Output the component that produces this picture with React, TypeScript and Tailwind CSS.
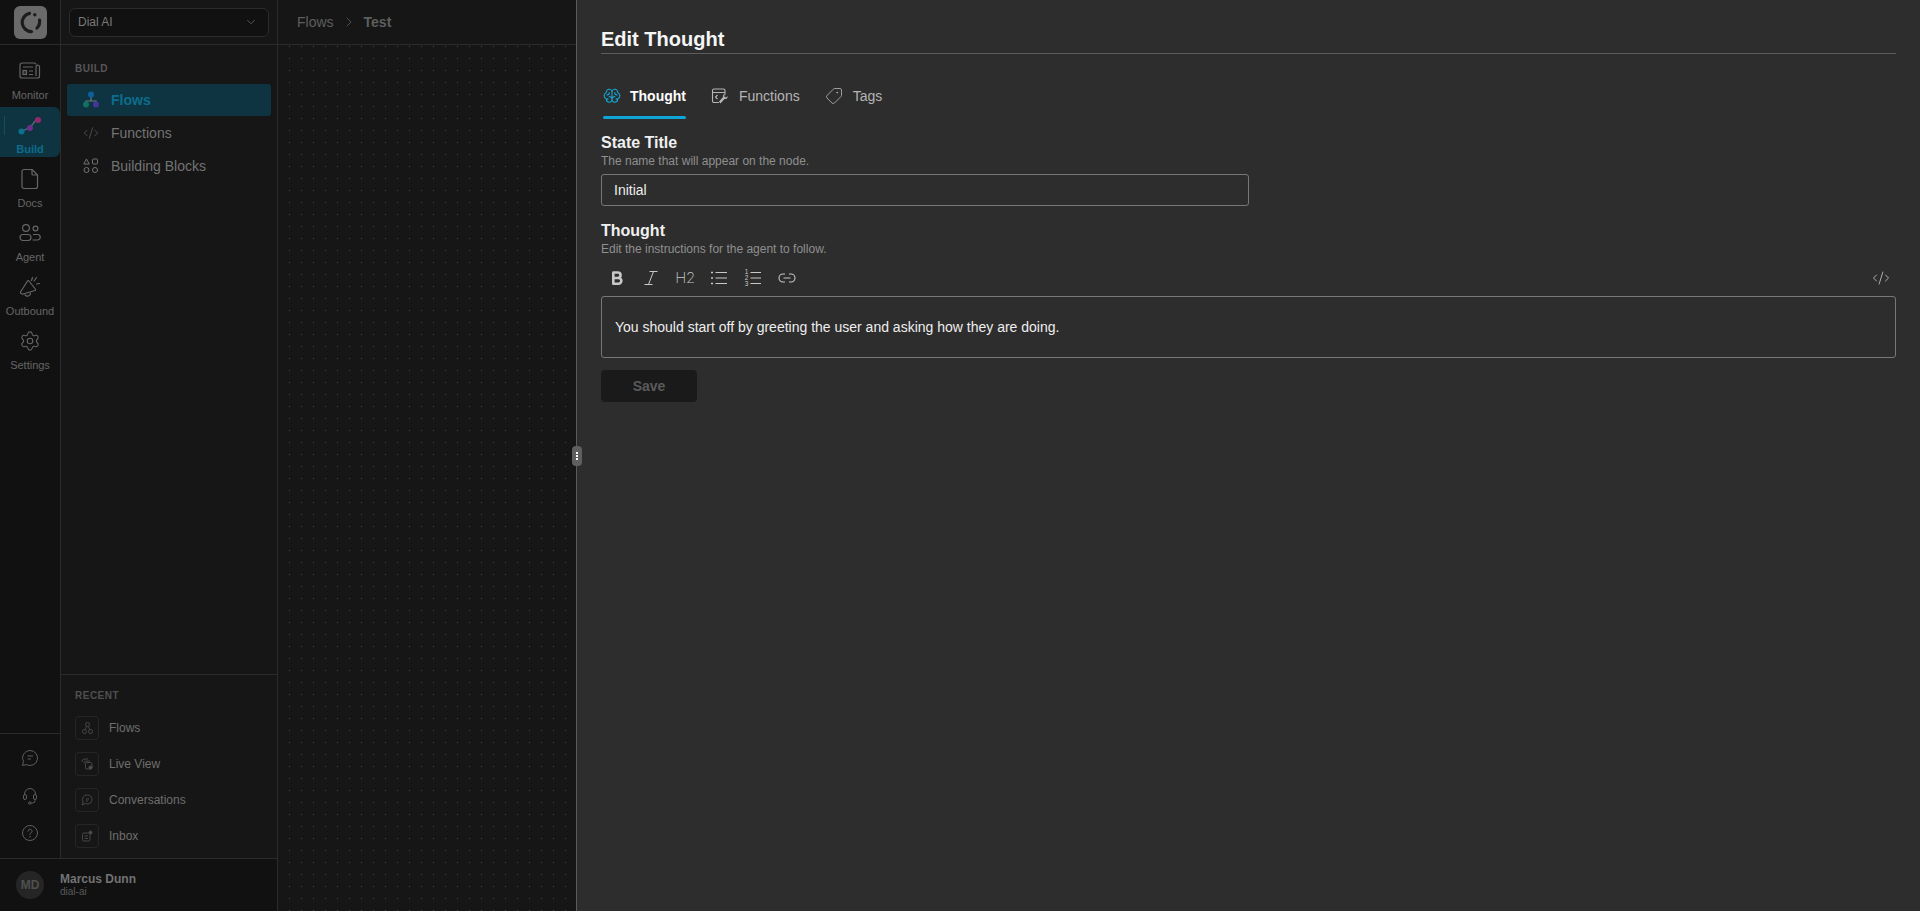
import { ChevronDown, ChevronRight, CodeXml, Settings, Tag } from "lucide-react";
import { PiBrain } from "react-icons/pi";

function Logo() {
  return (
    <div className="flex h-[33px] w-[33px] items-center justify-center rounded-md bg-[#6a6a6a]">
      <svg width="25" height="25" viewBox="0 0 25 25" fill="none" stroke="#1c1c1c" strokeWidth="3.2" strokeLinecap="round">
        <path d="M11.5 3.4A9.2 9.2 0 0 0 13.500 21.600" />
        <path d="M21.500 10a9.200 9.200 0 0 1-2.500 8" />
        <circle cx="16.800" cy="4.800" r="0.900" fill="#1c1c1c" strokeWidth="1.600" />
      </svg>
    </div>
  );
}

function BuildIcon() {
  return (
    <svg width="24" height="24" viewBox="0 0 24 24" fill="none">
      <path d="M3.500 18.500l9-4.500 7-9" stroke="#5a6e78" strokeWidth="1.300" />
      <circle cx="3.500" cy="18.500" r="3" fill="#0b6f8f" />
      <circle cx="12" cy="15" r="3" fill="#6c2f8c" />
      <circle cx="20" cy="7" r="3" fill="#92286f" />
    </svg>
  );
}

function FlowsIcon() {
  return (
    <svg width="16" height="18" viewBox="0 0 16 18" fill="none">
      <path d="M8 6v4M3 12v-2h10v2" stroke="#6b7a82" strokeWidth="1.200" />
      <circle cx="8" cy="3.500" r="3" fill="#0c5f9c" />
      <circle cx="3" cy="13.500" r="3" fill="#11705f" />
      <circle cx="13" cy="13.500" r="3" fill="#46349a" />
    </svg>
  );
}

function MonitorIcon() {
  return (
    <svg width="22" height="20" viewBox="0 0 22 20" fill="none" stroke="currentColor" strokeWidth="1.200">
      <path d="M17 3.500A1.700 1.700 0 0 0 15.300 2H3a2 2 0 0 0-2 2v11a2 2 0 0 0 2 2h15.500a2 2 0 0 0 2-2V6.500A1.500 1.500 0 0 0 17 5.500V15" />
      <path d="M4 6h10M10 10h4M10 13.500h4" />
      <rect x="4" y="9.500" width="3.500" height="4" fill="currentColor" fillOpacity="0.300" />
    </svg>
  );
}

function DocsIcon() {
  return (
    <svg width="18" height="22" viewBox="0 0 18 22" fill="none" stroke="currentColor" strokeWidth="1.200" strokeLinejoin="round">
      <path d="M3 1.500h8l5.500 5.500v11.500a2 2 0 0 1-2 2H3a2 2 0 0 1-2-2v-15a2 2 0 0 1 2-2z" />
      <path d="M11 1.500V6a1 1 0 0 0 1 1h4.500" />
    </svg>
  );
}

function AgentIcon() {
  return (
    <svg width="22" height="20" viewBox="0 0 22 20" fill="none" stroke="currentColor" strokeWidth="1.200">
      <circle cx="7" cy="5" r="3.400" />
      <circle cx="16.500" cy="5.500" r="2.400" />
      <rect x="1" y="11.500" width="11" height="6" rx="3" />
      <path d="M14 11.500h4.500a2.600 2.600 0 0 1 0 5.500H13.500" />
    </svg>
  );
}

function OutboundIcon() {
  return (
    <svg width="22" height="22" viewBox="0 0 22 22" fill="none" stroke="currentColor" strokeWidth="1.200" strokeLinecap="round" strokeLinejoin="round">
      <path d="M8.500 5 1.500 16a1 1 0 0 0 .4 1.300l1.200.7a1 1 0 0 0 .9 0L16 14.500a1 1 0 0 0 .3-1.500L10 5a1 1 0 0 0-1.500 0z" />
      <path d="M6 18.800a3 3 0 0 0 5.500-1.800" />
      <path d="M12.500 4.500 13.500 1.500M17.500 1.500l-2.500 3.500M17.500 8l3-.5" />
    </svg>
  );
}

function ChatIcon() {
  return (
    <svg width="18" height="18" viewBox="0 0 18 18" fill="none" stroke="currentColor" strokeWidth="1">
      <path d="M9 1.500a7.500 7.500 0 1 1-3.500 14.100L1.500 16.500l1-4A7.500 7.500 0 0 1 9 1.500z" strokeLinejoin="round" />
      <path d="M6.500 7h5.500M6.500 10h3.500" />
    </svg>
  );
}

function HeadsetIcon() {
  return (
    <svg width="18" height="18" viewBox="0 0 18 18" fill="none" stroke="currentColor" strokeWidth="1">
      <path d="M3.500 8V7a5.500 5.500 0 0 1 11 0v1" />
      <rect x="2.500" y="7.500" width="3" height="5" rx="1.500" />
      <rect x="12.500" y="7.500" width="3" height="5" rx="1.500" />
      <path d="M14 12.500v1a2.500 2.500 0 0 1-2.500 2.500H10" />
      <circle cx="8.800" cy="16" r="1.200" />
    </svg>
  );
}

function HelpIcon() {
  return (
    <svg width="16" height="16" viewBox="0 0 16 16" fill="none" stroke="currentColor" strokeWidth="1">
      <circle cx="8" cy="8" r="7.500" />
      <path d="M6 6.200a2 2 0 1 1 3 1.700c-.7.400-1 .8-1 1.600" strokeLinecap="round" />
      <circle cx="8" cy="11.800" r="0.400" />
    </svg>
  );
}

function BlocksIcon() {
  return (
    <svg width="16" height="16" viewBox="0 0 16 16" fill="none" stroke="currentColor" strokeWidth="1">
      <path d="M3.500 1 6.200 6H.8z" strokeLinejoin="round" />
      <rect x="9.500" y="1" width="5" height="5" rx="1" />
      <circle cx="3.500" cy="12" r="2.500" />
      <circle cx="12" cy="12" r="2.500" />
    </svg>
  );
}

function TabFunctionsIcon() {
  return (
    <svg width="18" height="18" viewBox="0 0 18 18" fill="none" stroke="currentColor" strokeWidth="1.100">
      <path d="M8 15.500H3a1.500 1.500 0 0 1-1.500-1.500V3.500A1.500 1.500 0 0 1 3 2h9.500A1.500 1.500 0 0 1 14 3.500V7" />
      <path d="M1.500 5.500H14M6.500 8 4.500 10l2 2" />
      <path d="M9.500 16.500l4-4.500a2.400 2.400 0 0 0 3-3l-1.500 1.400-1.400-.4-.4-1.400L15 7a2.400 2.400 0 0 0-3 3l-4 4.500z" fill="currentColor" stroke="none" />
    </svg>
  );
}

function BoldIcon() {
  return (
    <svg width="18" height="18" viewBox="0 0 18 18" fill="none" stroke="currentColor" strokeWidth="2.600" strokeLinejoin="round">
      <path d="M5.300 3.500h4.500a2.700 2.700 0 0 1 0 5.500H5.300zM5.300 9h5.200a2.800 2.800 0 0 1 0 5.700H5.300z" />
    </svg>
  );
}

function ItalicIcon() {
  return (
    <svg width="18" height="18" viewBox="0 0 18 18" fill="none" stroke="currentColor" strokeWidth="1">
      <path d="M7.500 2.500h8M2.500 15.500h8M11.500 2.500l-5 13" />
    </svg>
  );
}

function ListIcon() {
  return (
    <svg width="18" height="18" viewBox="0 0 18 18" fill="none" stroke="currentColor" strokeWidth="1">
      <path d="M5.500 3.500h11.500M5.500 9h11.500M5.500 14.500h11.500" />
      <path d="M1 3.500h2M1 9h2M1 14.500h2" strokeWidth="1.400" />
    </svg>
  );
}

function OrderedIcon() {
  return (
    <svg width="18" height="18" viewBox="0 0 18 18" fill="none" stroke="currentColor" strokeWidth="1">
      <path d="M6.500 3.500h10.500M6.500 9h10.500M6.500 14.500h10.500" />
      <g fill="currentColor" stroke="none" fontSize="6.500" fontFamily="Liberation Sans" textAnchor="middle">
        <text x="2.500" y="5">1</text>
        <text x="2.500" y="11">2</text>
        <text x="2.500" y="17">3</text>
      </g>
    </svg>
  );
}

function LinkIcon() {
  return (
    <svg width="18" height="18" viewBox="0 0 18 18" fill="none" stroke="currentColor" strokeWidth="1.100">
      <path d="M7 5H5a4 4 0 0 0 0 8h2M11 5h2a4 4 0 0 1 0 8h-2M5.500 9h7" />
    </svg>
  );
}

function RailItem({ icon, label, active }: { icon: React.ReactNode; label: string; active?: boolean }) {
  return (
    <div className={`relative flex h-[50px] w-[60px] flex-col items-center gap-[5px] rounded-r-md pt-[6px] ${active ? "bg-[#0d3440] font-bold text-[#0e6c8c]" : "text-[#666]"}`}>
      {active && <span className="absolute left-[4px] top-[9px] h-[19px] w-px bg-[#154c5e]" />}
      <span className="flex h-[24px] items-center justify-center">{icon}</span>
      <span className="text-[11px] leading-[14px]">{label}</span>
    </div>
  );
}

function RecentRow({ icon, label }: { icon: React.ReactNode; label: string }) {
  return (
    <div className="flex h-[24px] items-center gap-[10px]">
      <span className="flex h-[24px] w-[24px] items-center justify-center rounded border border-[#262626] text-[#4d4d4d]">{icon}</span>
      <span className="text-xs text-[#6e6e6e]">{label}</span>
    </div>
  );
}

function SmallFlows() {
  return (
    <svg width="11" height="12" viewBox="0 0 11 12" fill="none" stroke="currentColor" strokeWidth="0.900">
      <circle cx="5.500" cy="2.500" r="2" />
      <circle cx="2.500" cy="9.500" r="2" />
      <circle cx="8.500" cy="9.500" r="2" />
      <path d="M4.500 4.500l-1.200 3M6.500 4.500l1.200 3" />
    </svg>
  );
}

function SmallLive() {
  return (
    <svg width="12" height="12" viewBox="0 0 12 12" fill="none" stroke="currentColor" strokeWidth="0.900">
      <path d="M1 4a3 3 0 0 1 3-3h3M3 5.500a2.500 2.500 0 0 1 2.500-2.500H9" />
      <rect x="4.500" y="4.500" width="6.500" height="6.500" rx="1.500" />
      <circle cx="9.500" cy="9.500" r="1.600" fill="currentColor" />
    </svg>
  );
}

function SmallConversation() {
  return (
    <svg width="12" height="12" viewBox="0 0 12 12" fill="none" stroke="currentColor" strokeWidth="0.900">
      <path d="M6.500 1a4.500 4.500 0 1 1-2 8.500L1 11l1.200-3A4.500 4.500 0 0 1 6.500 1z" strokeLinejoin="round" />
      <path d="M5 5h3M5 7h2" />
    </svg>
  );
}

function SmallInbox() {
  return (
    <svg width="12" height="12" viewBox="0 0 12 12" fill="none" stroke="currentColor" strokeWidth="0.900">
      <rect x="1.500" y="3" width="7.500" height="8" rx="1.500" />
      <path d="M3.500 6h3.500M3.500 8.500h3.500" />
      <circle cx="9.500" cy="2.500" r="1.500" fill="currentColor" />
    </svg>
  );
}

export default function App() {
  return (
    <div className="relative flex h-[911px] w-[1920px] overflow-hidden bg-[#161616] font-['Liberation_Sans',sans-serif]">
      <div className="flex w-[278px] shrink-0 flex-col border-r border-[#2b2b2b]">
        <div className="flex min-h-0 flex-1">
          {/* rail */}
          <div className="flex w-[61px] shrink-0 flex-col border-r border-[#2b2b2b] bg-[#111]">
            <div className="flex h-[45px] shrink-0 items-center justify-center border-b border-[#2b2b2b]">
              <Logo />
            </div>
            <div className="flex flex-1 flex-col gap-[4px] pt-[8px]">
              <RailItem icon={<MonitorIcon />} label="Monitor" />
              <RailItem active icon={<BuildIcon />} label="Build" />
              <RailItem icon={<DocsIcon />} label="Docs" />
              <RailItem icon={<AgentIcon />} label="Agent" />
              <RailItem icon={<OutboundIcon />} label="Outbound" />
              <RailItem icon={<Settings size={22} strokeWidth={1.2} />} label="Settings" />
            </div>
            <div className="flex h-[125px] shrink-0 flex-col items-center justify-center gap-[20px] pb-[2px] border-t border-[#2b2b2b] text-[#5e5e5e]">
              <ChatIcon />
              <HeadsetIcon />
              <HelpIcon />
            </div>
          </div>
          {/* sidebar */}
          <div className="flex min-w-0 flex-1 flex-col">
            <div className="flex h-[45px] shrink-0 items-center border-b border-[#2b2b2b] px-[8px]">
              <div className="flex h-[29px] w-[200px] items-center justify-between rounded-md border border-[#2b2b2b] bg-[#111] pl-[8px] pr-[10px] text-xs text-[#7a7a7a]">
                Dial AI
                <ChevronDown size={14} strokeWidth={1.4} className="text-[#666]" />
              </div>
            </div>
            <div className="flex flex-1 flex-col px-[6px] pt-[18px]">
              <div className="mb-[9px] pl-[8px] text-[10px] font-bold leading-[12px] tracking-[0.5px] text-[#565656]">BUILD</div>
              <div className="flex h-[32px] items-center gap-[12px] rounded-[3px] bg-[#0d3440] pl-[16px] text-sm font-bold text-[#0e6c8c]">
                <FlowsIcon />
                Flows
              </div>
              <div className="flex h-[33px] items-center gap-[12px] pl-[16px] text-sm text-[#737373]">
                <CodeXml size={16} strokeWidth={1.1} className="text-[#5e5e5e]" />
                Functions
              </div>
              <div className="flex h-[33px] items-center gap-[12px] pl-[16px] text-sm text-[#737373]">
                <BlocksIcon />
                Building Blocks
              </div>
            </div>
            <div className="flex h-[184px] shrink-0 flex-col border-t border-[#2b2b2b] pl-[14px] pt-[15px]">
              <div className="mb-[14px] text-[10px] font-bold leading-[12px] tracking-[0.5px] text-[#4f4f4f]">RECENT</div>
              <div className="flex flex-col gap-[12px]">
                <RecentRow icon={<SmallFlows />} label="Flows" />
                <RecentRow icon={<SmallLive />} label="Live View" />
                <RecentRow icon={<SmallConversation />} label="Conversations" />
                <RecentRow icon={<SmallInbox />} label="Inbox" />
              </div>
            </div>
          </div>
        </div>
        <div className="flex h-[53px] shrink-0 items-center gap-[6px] border-t border-[#2b2b2b] bg-[#111] pl-[16px]">
          <div className="flex h-[28px] w-[28px] items-center justify-center rounded-full bg-[#252525] text-xs font-bold text-[#4f4f4f]">MD</div>
          <div className="mb-[2px] ml-[10px] flex flex-col">
            <span className="text-xs font-bold leading-[14px] text-[#737373]">Marcus Dunn</span>
            <span className="text-[10px] leading-[11px] text-[#5a5a5a]">dial-ai</span>
          </div>
        </div>
      </div>
      {/* canvas */}
      <div className="flex flex-1 flex-col">
        <div className="flex h-[45px] shrink-0 items-center gap-[7px] border-b border-[#2b2b2b] pl-[19px] text-sm text-[#5e5e5e]">
          Flows
          <ChevronRight size={16} strokeWidth={1.2} />
          <span className="font-bold">Test</span>
        </div>
        <div className="flex-1 bg-[radial-gradient(circle_at_11.5px_1.5px,#484848_0.7px,transparent_0.7px)] bg-[size:12px_12px]" />
      </div>
      {/* drawer */}
      <div className="absolute bottom-0 left-[576px] right-0 top-0 border-l border-[#5a5a5a] bg-[#2d2d2d] px-[24px] text-white">
        <div className="absolute left-[-5px] top-[446px] flex h-[20px] w-[10px] flex-col items-center justify-center gap-[1px] rounded-[4px] bg-[#5f5f5f]">
          <span className="h-[2px] w-[2px] bg-white" />
          <span className="h-[2px] w-[2px] bg-white" />
          <span className="h-[2px] w-[2px] bg-white" />
        </div>
        <div className="flex h-[54px] items-end border-b border-[#5c5c5c]">
          <h1 className="text-xl font-bold leading-[28px] text-[#f5f5f5]">Edit Thought</h1>
        </div>
        <div className="mt-[20px] flex h-[45px] gap-[25px] text-sm">
          <div className="ml-[2px] flex h-[45px] flex-col">
            <div className="flex flex-1 items-center gap-[9px] pb-[3px] pt-[4px] font-bold">
              <PiBrain size={18} className="text-[#12a5d1]" />
              Thought
            </div>
            <span className="h-[3px] rounded-full bg-[#0ea5d6]" />
          </div>
          <div className="flex h-[45px] items-center gap-[10px] pb-[2px] text-[#b5b5b5]">
            <TabFunctionsIcon />
            Functions
          </div>
          <div className="flex h-[45px] items-center gap-[10px] pb-[2px] text-[#b5b5b5]">
            <Tag size={18} strokeWidth={1.1} className="-scale-x-100" />
            Tags
          </div>
        </div>
        <div className="mt-[14px] text-base font-bold leading-[20px] text-[#f0f0f0]">State Title</div>
        <div className="text-xs leading-[16px] text-[#8f8f8f]">The name that will appear on the node.</div>
        <input readOnly value="Initial" className="mt-[5px] block h-[32px] w-[648px] rounded-[3px] border border-[#777] bg-transparent px-[12px] text-sm text-[#eee] outline-none" />
        <div className="mt-[15px] text-base font-bold leading-[20px] text-[#f0f0f0]">Thought</div>
        <div className="text-xs leading-[16px] text-[#8f8f8f]">Edit the instructions for the agent to follow.</div>
        <div className="flex h-[39px] items-center justify-between pl-[7px] pr-[6px] pt-[2px] text-[#c8c8c8]">
          <div className="flex items-center gap-[16px]">
            <BoldIcon />
            <ItalicIcon />
            <span className="flex w-[18px] justify-center font-['Inter',sans-serif] text-[15px] font-extralight leading-[18px] tracking-[-0.5px]">H2</span>
            <ListIcon />
            <OrderedIcon />
            <LinkIcon />
          </div>
          <CodeXml size={18} strokeWidth={1.1} />
        </div>
        <div className="flex h-[62px] items-center rounded-[3px] border border-[#777] px-[13px] text-sm text-[#eee]">
          You should start off by greeting the user and asking how they are doing.
        </div>
        <button className="mt-[12px] h-[32px] w-[96px] rounded-[4px] bg-[#1a1a1a] text-sm font-bold text-[#5a5a5a]">Save</button>
      </div>
    </div>
  );
}
